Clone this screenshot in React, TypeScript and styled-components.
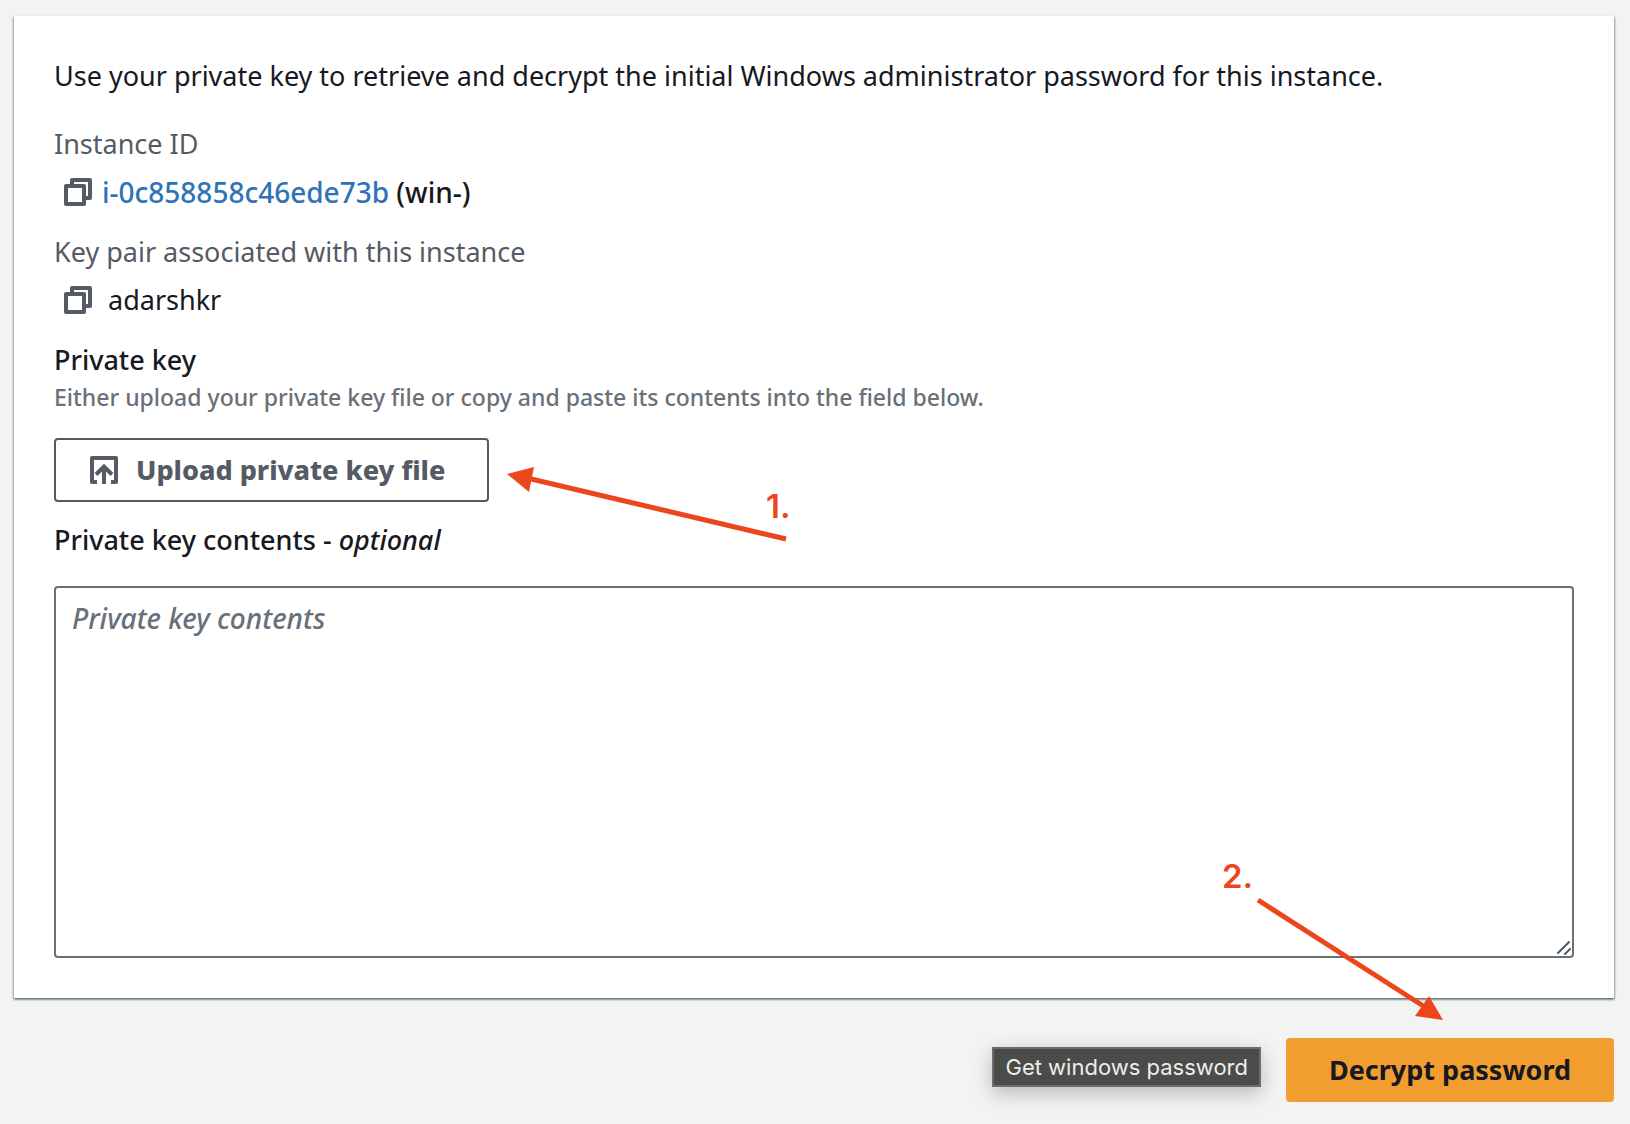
import React from "react";
import styled, { createGlobalStyle } from "styled-components";

const GlobalStyle = createGlobalStyle`
  * { box-sizing: border-box; }
  body {
    margin: 0;
    background: #f2f4f4;
    color: #16191f;
    font-family: "Noto Sans", "Open Sans", sans-serif;
    font-size: 27px;
    font-weight: 400;
    line-height: 44px;
  }
`;

const Page = styled.main`
  display: flex;
  flex-direction: column;
  gap: 40px;
  padding: 16px 16px 22px 14px;
`;

const Card = styled.section`
  display: flex;
  flex-direction: column;
  gap: 16px;
  padding: 38px 40px 40px;
  background: #fff;
  box-shadow: 0 -1px 0 0 #eaeded, 0 2px 2px 0 rgba(0, 28, 36, 0.3),
    1px 1px 2px 0 rgba(0, 28, 36, 0.3), -1px 1px 2px 0 rgba(0, 28, 36, 0.3);
`;

const Intro = styled.p`
  margin: 0 0 8px;
`;

const Fields = styled.dl`
  display: flex;
  flex-direction: column;
  gap: 16px;
  margin: 0;
`;

const Field = styled.div`
  display: flex;
  flex-direction: column;
  gap: 4px;
`;

const FieldName = styled.dt`
  color: #545b64;
`;

const FieldValue = styled.dd<{ $gap: number }>`
  display: flex;
  align-items: center;
  gap: ${(p) => p.$gap}px;
  margin: 0;
  padding-left: 10px;
`;

const CopyButton = styled.button`
  display: flex;
  padding: 0;
  border: 0;
  background: none;
  color: #545b64;
  cursor: pointer;
`;

const InstanceName = styled.span`
  font-size: 28px;
  font-weight: 500;
`;

const Link = styled.a`
  color: #2e73b8;
  text-decoration: none;
`;

const KeyHeading = styled.h2`
  margin: 0;
  font-size: inherit;
  font-weight: 500;
`;

const Hint = styled.p`
  margin: 0 0 26px;
  color: #687078;
  font-size: 23px;
  font-weight: 500;
  line-height: 30px;
`;

const Anchor = styled.div`
  position: relative;
  width: fit-content;
`;

const Button = styled.button<{ $primary?: boolean }>`
  display: flex;
  align-items: center;
  gap: 18px;
  height: 64px;
  padding: ${(p) => (p.$primary ? "0 41px" : "0 42px 0 34px")};
  border: 2px solid ${(p) => (p.$primary ? "#f29d2f" : "#545b64")};
  border-radius: 4px;
  background: ${(p) => (p.$primary ? "#f29d2f" : "#fff")};
  color: ${(p) => (p.$primary ? "#16191f" : "#545b64")};
  font: inherit;
  font-weight: ${(p) => (p.$primary ? 700 : 800)};
  cursor: pointer;
`;

const Label = styled.label`
  display: block;
  margin-bottom: 24px;
  font-weight: 500;
`;

const AreaFrame = styled.div`
  position: relative;
  display: flex;
`;

const Area = styled.textarea`
  flex: 1;
  padding: 8px 16px;
  border: 2px solid #687078;
  border-radius: 4px;
  background: #fff;
  color: #16191f;
  font: inherit;
  font-size: 28px;
  font-weight: 500;
  resize: none;
  &::placeholder {
    color: #687078;
    font-style: italic;
    opacity: 1;
  }
`;

const Grip = styled.svg`
  position: absolute;
  right: 3px;
  bottom: 3px;
`;

const Footer = styled.footer`
  display: flex;
  justify-content: flex-end;
`;

const Tooltip = styled.div`
  position: absolute;
  right: calc(100% + 25px);
  top: 9px;
  padding: 0 11px;
  border: 2px solid #6b6d6d;
  background: #4b4b49;
  color: #ededed;
  box-shadow: 0 6px 20px rgba(0, 0, 0, 0.25);
  font-family: Inter, "Liberation Sans", sans-serif;
  font-size: 22px;
  font-weight: 400;
  line-height: 36px;
  white-space: nowrap;
`;

const Note = styled.div<{ $left: number; $top: number }>`
  position: absolute;
  left: ${(p) => p.$left}px;
  top: ${(p) => p.$top}px;
  color: #ed461c;
  pointer-events: none;
`;

const NoteNumber = styled.span<{ $left: number; $top: number }>`
  position: absolute;
  left: ${(p) => p.$left}px;
  top: ${(p) => p.$top}px;
  font-family: Inter, sans-serif;
  font-size: 33px;
  font-weight: 600;
  line-height: 40px;
`;

const CopyIcon = () => (
  <svg width="28" height="28" viewBox="0 0 28 28" fill="none" stroke="currentColor" strokeWidth="4" strokeLinejoin="round" aria-hidden="true">
    <rect x="2" y="8" width="18" height="18" />
    <path d="M8 6V2H26V20H22" />
  </svg>
);

const UploadIcon = () => (
  <svg width="28" height="28" viewBox="0 0 28 28" fill="none" stroke="currentColor" strokeWidth="4" strokeLinejoin="round" aria-hidden="true">
    <path d="M7 26H2V2H26V26H21" />
    <path d="M14 28V11M6 18.5L14 10.5L22 18.5" strokeLinejoin="miter" />
  </svg>
);

export default function App() {
  return (
    <>
      <GlobalStyle />
      <Page>
        <Card>
          <Intro>
            Use your private key to retrieve and decrypt the initial Windows administrator password for this instance.
          </Intro>
          <Fields>
            <Field>
              <FieldName>Instance ID</FieldName>
              <FieldValue $gap={10}>
                <CopyButton type="button" aria-label="Copy instance ID">
                  <CopyIcon />
                </CopyButton>
                <InstanceName>
                  <Link href="#instance">i-0c858858c46ede73b</Link> (win-)
                </InstanceName>
              </FieldValue>
            </Field>
            <Field>
              <FieldName>Key pair associated with this instance</FieldName>
              <FieldValue $gap={16}>
                <CopyButton type="button" aria-label="Copy key pair name">
                  <CopyIcon />
                </CopyButton>
                <span>adarshkr</span>
              </FieldValue>
            </Field>
          </Fields>
          <div>
            <KeyHeading>Private key</KeyHeading>
            <Hint>Either upload your private key file or copy and paste its contents into the field below.</Hint>
            <Anchor>
              <Button type="button">
                <UploadIcon />
                Upload private key file
              </Button>
              <Note $left={453} $top={28}>
                <svg width="284" height="76" viewBox="0 0 284 76" aria-hidden="true">
                  <path d="M20 12L279 73" stroke="currentColor" strokeWidth="5" />
                  <path d="M0 8L27 1L22 26Z" fill="currentColor" />
                </svg>
                <NoteNumber $left={259} $top={20}>1.</NoteNumber>
              </Note>
            </Anchor>
          </div>
          <div>
            <Label htmlFor="key-contents">
              Private key contents - <em>optional</em>
            </Label>
            <AreaFrame>
              <Area id="key-contents" rows={8} placeholder="Private key contents" />
              <Grip width="14" height="14" viewBox="0 0 14 14" fill="none" stroke="#545b64" strokeWidth="2" strokeLinecap="round" aria-hidden="true">
                <path d="M1 12L12 1M8 13L13 8" />
              </Grip>
            </AreaFrame>
          </div>
        </Card>
        <Footer>
          <Anchor>
            <Button type="button" $primary aria-describedby="decrypt-tip">
              Decrypt password
            </Button>
            <Tooltip id="decrypt-tip" role="tooltip">Get windows password</Tooltip>
            <Note $left={-64} $top={-176}>
              <svg width="222" height="160" viewBox="0 0 222 160" aria-hidden="true">
                <path d="M36 38L206 147" stroke="currentColor" strokeWidth="5" />
                <path d="M221 158L193 154L207 134Z" fill="currentColor" />
              </svg>
              <NoteNumber $left={0} $top={-6}>2.</NoteNumber>
            </Note>
          </Anchor>
        </Footer>
      </Page>
    </>
  );
}
